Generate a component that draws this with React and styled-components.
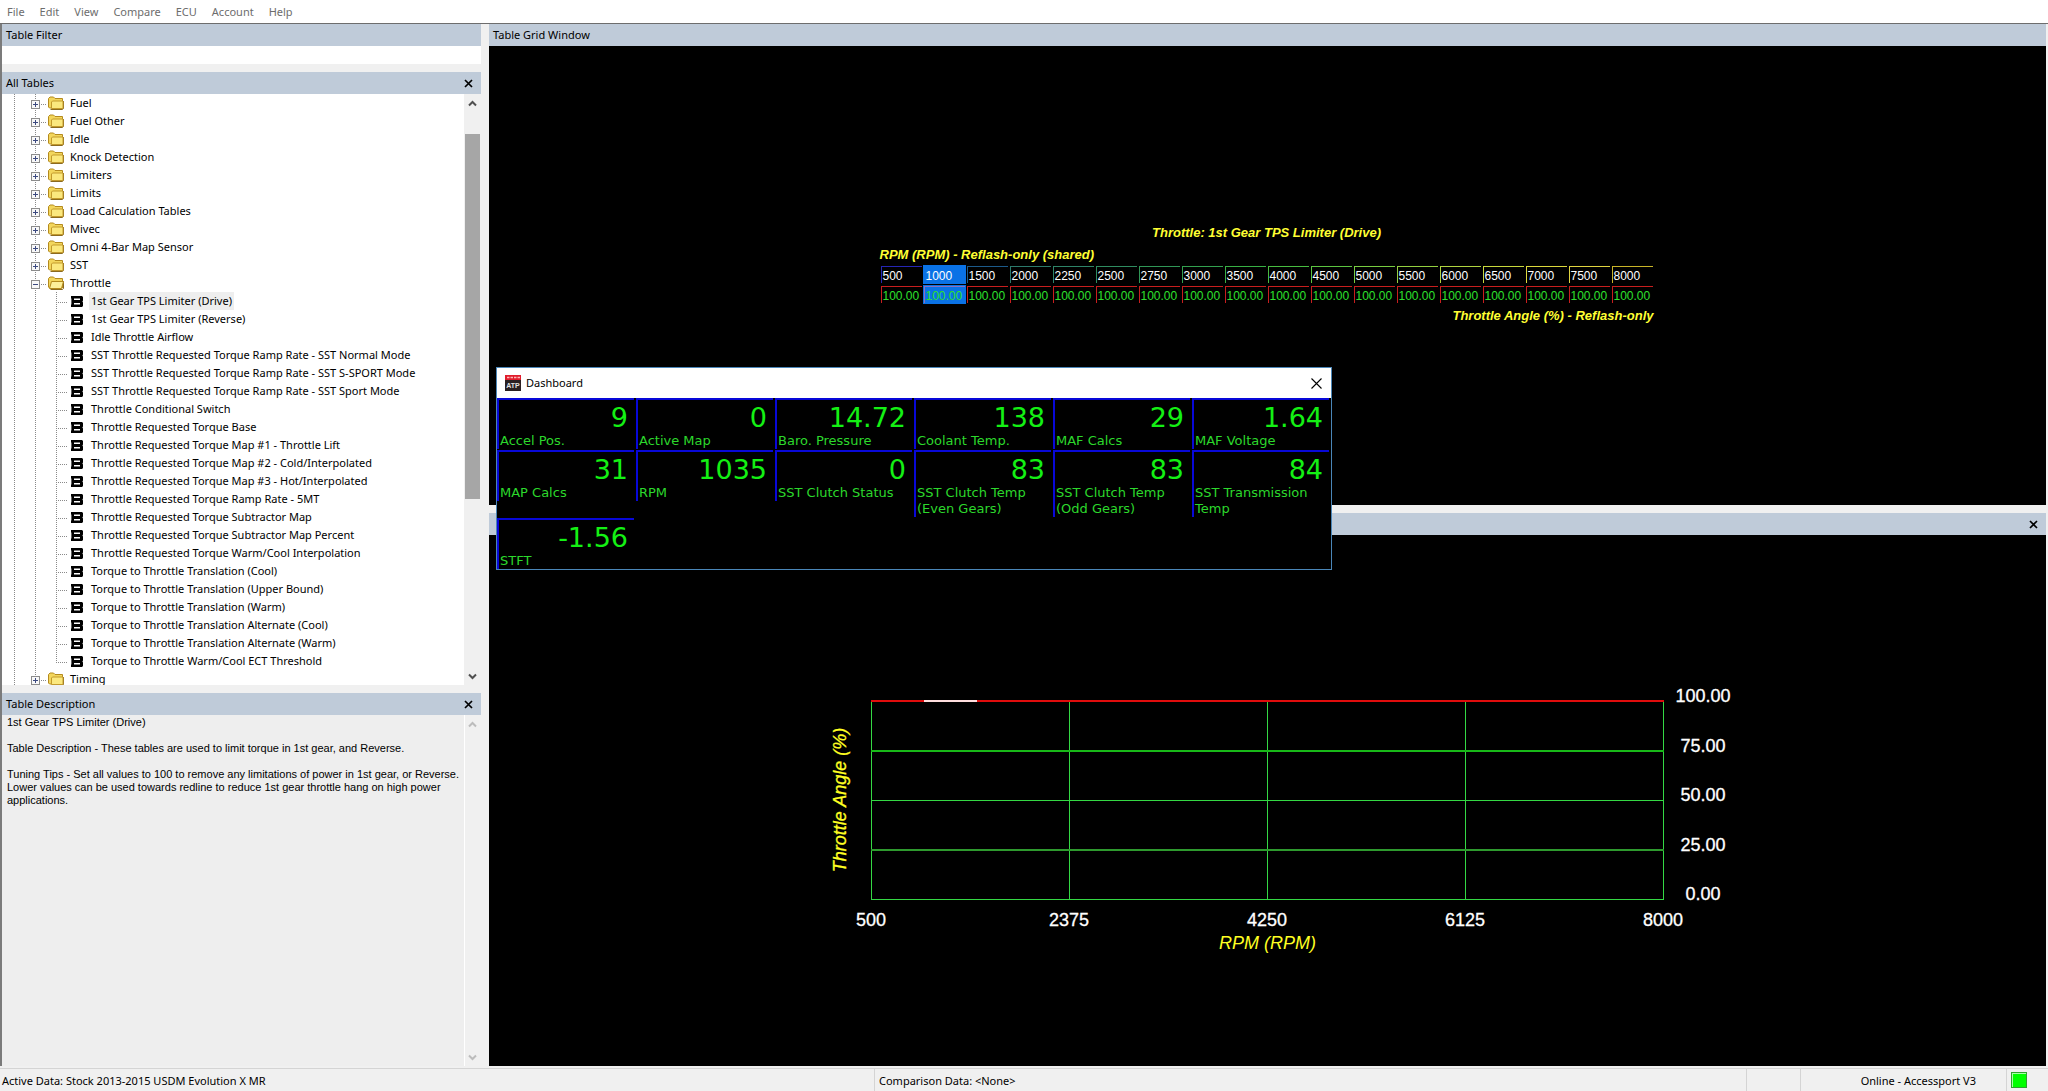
import styled, { createGlobalStyle } from 'styled-components';


const GlobalStyle = createGlobalStyle`
	* {
		box-sizing: border-box;
	}
	body {
		margin: 0;
		background: #f0f0f0;
		font-family: 'Noto Sans', 'Open Sans', sans-serif;
		font-size: 11px;
		line-height: 18px;
		color: #000000;
	}
	button {
		margin: 0;
		padding: 0;
		border: 0;
		background: none;
		font: inherit;
		color: inherit;
	}
`;

const Page = styled.div`
	position: relative;
	display: flex;
	flex-direction: column;
	height: 100vh;
	overflow: hidden;
`;

const MenuBar = styled.nav`
	display: flex;
	gap: 15px;
	flex: none;
	height: 24px;
	padding: 3px 7px 0 7px;
	background: #ffffff;
	border-bottom: 1px solid #6d6d6d;
`;

const MenuItem = styled.button`
	height: 18px;
	color: #6d6d6d;
`;

const Body = styled.div`
	display: flex;
	flex: 1;
	gap: 8px;
	min-height: 0;
	padding: 0 2px 2px 0;
`;

const Sidebar = styled.aside`
	display: flex;
	flex-direction: column;
	gap: 8px;
	flex: 0 0 481px;
	min-height: 0;
	border-left: 2px solid #7b7b7b;
`;

const Main = styled.main`
	display: flex;
	flex-direction: column;
	gap: 8px;
	flex: 1;
	min-width: 0;
`;

const Panel = styled.section`
	display: flex;
	flex-direction: column;
	flex: ${props => props.$grow ? `${props.$grow} 1 0` : 'none'};
	min-height: 0;
`;

const PanelHeader = styled.header`
	display: flex;
	align-items: center;
	justify-content: space-between;
	flex: none;
	height: 22px;
	padding: 0 8px 0 4px;
	background: #bfcbd9;
`;

const PanelTitle = styled.h2`
	margin: 0;
	font-size: 11px;
	font-weight: normal;
`;

const CloseButton = styled.button`
	display: flex;
	margin-left: auto;
`;

const FilterInput = styled.input`
	width: 100%;
	height: 18px;
	padding: 0 4px;
	border: 0;
	font: inherit;
	background: #ffffff;
`;

const ScrollArea = styled.div`
	display: flex;
	flex: 1;
	min-height: 0;
	background: ${props => props.$muted ? '#eeeeee' : '#ffffff'};
`;

const ScrollBar = styled.div`
	display: flex;
	flex-direction: column;
	align-items: center;
	flex: 0 0 17px;
	padding: 4px 1px 3px 0;
	background: #f0f0f0;
	border-left: 1px solid ${props => props.$muted ? '#ffffff' : '#f0f0f0'};
	color: ${props => props.$muted ? '#bcbcbc' : '#505050'};
`;

const ScrollTrack = styled.div`
	flex: 1;
	width: 100%;
	padding-top: 25px;
`;

const ScrollThumb = styled.div`
	height: 68%;
	background: #a6a6a6;
`;

const ScrollButton = styled.button`
	display: flex;
	height: 11px;
	align-items: center;
`;

const Tree = styled.ul`
	flex: 1;
	margin: 0;
	padding: 0 0 0 2px;
	list-style: none;
	overflow: hidden;
`;

const TreeRow = styled.li`
	display: flex;
	align-items: center;
	height: 18px;
	white-space: nowrap;
`;

const Guide = styled.span`
	display: flex;
	align-items: center;
	flex: 0 0 21px;
	height: 18px;
	padding: 2px 0 0 6px;
	background-image:
		repeating-linear-gradient(to bottom, #8a8a8a 0 1px, transparent 1px 2px),
		repeating-linear-gradient(to right, #8a8a8a 0 1px, transparent 1px 2px);
	background-repeat: no-repeat;
	background-position: 10px 0, 10px 10px;
	background-size: 1px ${props => props.$end ? '11px' : '18px'}, ${props => props.$branch ? '11px' : '0'} 1px;
`;

const Expander = styled.button`
	display: flex;
	width: 9px;
	height: 9px;
	background: #ffffff;
`;

const FolderLabel = styled.span`
	padding-left: 6px;
	line-height: 12px;
`;

const TableLink = styled.button`
	height: 18px;
	margin-left: 6px;
	padding: 0 2px;
	background: ${props => props.$selected ? '#eeeeee' : 'none'};
`;

const IconSlot = styled.span`
	display: flex;
	padding-left: ${props => props.$leaf ? '4px' : '2px'};
`;

const Description = styled.div`
	flex: 1;
	padding: 1px 4px 0 5px;
	font-family: 'Liberation Sans', Arial, sans-serif;
	line-height: 13px;
`;

const Para = styled.p`
	margin: 0 0 13px 0;
`;

const Canvas = styled.div`
	display: flex;
	align-items: center;
	justify-content: center;
	flex: 1;
	min-height: 0;
	background: #000000;
	font-family: 'Liberation Sans', Arial, sans-serif;
`;

const MapTable = styled.div`
	display: flex;
	flex-direction: column;
	padding: 0 2px 2px 0;
	color: #ffff33;
	font-size: 13px;
	font-weight: bold;
	font-style: italic;
	line-height: 16px;
`;

const MapTitle = styled.div`
	margin-bottom: 6px;
	text-align: center;
`;

const AxisName = styled.div`
	padding: 0 1px;
	text-align: ${props => props.$right ? 'right' : 'left'};
`;

const Grid = styled.table`
	margin-bottom: 2px;
	border-collapse: separate;
	border-spacing: 2px 3px;
	table-layout: fixed;
	font-size: 12px;
	font-style: normal;
	font-weight: normal;
`;

const AxisCell = styled.th`
	width: 41px;
	height: 17px;
	padding: 3px 0 0 1px;
	border-top: 1px solid ${props => props.$tint};
	border-left: 1px solid ${props => props.$tint};
	background: ${props => props.$selected ? '#0a72e6' : '#000000'};
	box-shadow: ${props => props.$selected ? '0 0 0 1px #0a72e6' : 'none'};
	color: #ffffff;
	font-weight: normal;
	line-height: 13px;
	text-align: left;
`;

const ValueCell = styled.td`
	width: 41px;
	height: 17px;
	padding: 3px 0 0 1px;
	border-top: 1px solid ${props => props.$selected ? '#8a6fc0' : '#c81e1e'};
	border-left: 1px solid ${props => props.$selected ? '#8a6fc0' : '#c81e1e'};
	background: ${props => props.$selected ? '#0a72e6' : '#000000'};
	box-shadow: ${props => props.$selected ? '0 0 0 1px #0a72e6' : 'none'};
	color: #2ee02e;
	line-height: 13px;
`;

const ChartText = styled.text`
	font-family: 'Liberation Sans', Arial, sans-serif;
	font-size: 18px;
	font-style: ${props => props.$title ? 'italic' : 'normal'};
	fill: ${props => props.$title ? '#ffff22' : '#ffffff'};
	stroke: ${props => props.$title ? '#ffff22' : '#ffffff'};
	stroke-width: 0.3px;
	text-anchor: middle;
`;

const ChartBox = styled.figure`
	display: flex;
	flex-direction: column;
	align-items: center;
	margin: 0;
	padding-top: 18px;
`;

const ChartCaption = styled.figcaption`
	color: #ffff22;
	font-size: 18px;
	font-style: italic;
	line-height: 22px;
`;

const DashWindow = styled.section`
	position: absolute;
	top: 367px;
	left: 496px;
	width: 836px;
	background: #000000;
	border: 1px solid #4a86b8;
`;

const DashHeader = styled.header`
	display: flex;
	align-items: center;
	gap: 5px;
	height: 30px;
	padding: 0 9px 0 8px;
	background: #ffffff;
`;

const Gauges = styled.div`
	display: grid;
	grid-template-columns: repeat(6, 1fr);
	align-items: start;
	gap: 1px 2px;
	padding-right: 2px;
	font-family: 'DejaVu Sans', Verdana, sans-serif;
`;

const Gauge = styled.div`
	padding: 3px 0 0 1px;
	border-top: 2px solid #0808d8;
	border-left: 2px solid #0808d8;
`;

const GaugeValue = styled.div`
	padding-right: 6px;
	color: #14f014;
	font-size: 27px;
	line-height: 30px;
	text-align: right;
`;

const GaugeLabel = styled.div`
	color: #2cd82c;
	font-size: 13px;
	line-height: 16px;
`;

const StatusBar = styled.footer`
	display: flex;
	flex: none;
	height: 23px;
	border-top: 1px solid #d4d4d4;
	line-height: 24px;
`;

const StatusCell = styled.div`
	flex: ${props => props.$width ? `0 0 ${props.$width}px` : '1 1 0'};
	padding: 0 ${props => props.$right ? '30px' : '4px'} 0 ${props => props.$first ? '2px' : '4px'};
	border-right: 1px solid #d4d4d4;
	text-align: ${props => props.$right ? 'right' : 'left'};
`;

const StatusLight = styled.div`
	flex: none;
	width: 16px;
	height: 16px;
	margin: 3px 21px 0 4px;
	background: #00ff00;
	border: 1px solid #30a030;
	box-shadow: inset 1px 1px 0 #a8ffa8;
`;


const menu = ['File', 'Edit', 'View', 'Compare', 'ECU', 'Account', 'Help'];

const folders = [
	'Fuel',
	'Fuel Other',
	'Idle',
	'Knock Detection',
	'Limiters',
	'Limits',
	'Load Calculation Tables',
	'Mivec',
	'Omni 4-Bar Map Sensor',
	'SST',
];

const throttleTables = [
	'1st Gear TPS Limiter (Drive)',
	'1st Gear TPS Limiter (Reverse)',
	'Idle Throttle Airflow',
	'SST Throttle Requested Torque Ramp Rate - SST Normal Mode',
	'SST Throttle Requested Torque Ramp Rate - SST S-SPORT Mode',
	'SST Throttle Requested Torque Ramp Rate - SST Sport Mode',
	'Throttle Conditional Switch',
	'Throttle Requested Torque Base',
	'Throttle Requested Torque Map #1 - Throttle Lift',
	'Throttle Requested Torque Map #2 - Cold/Interpolated',
	'Throttle Requested Torque Map #3 - Hot/Interpolated',
	'Throttle Requested Torque Ramp Rate - 5MT',
	'Throttle Requested Torque Subtractor Map',
	'Throttle Requested Torque Subtractor Map Percent',
	'Throttle Requested Torque Warm/Cool Interpolation',
	'Torque to Throttle Translation (Cool)',
	'Torque to Throttle Translation (Upper Bound)',
	'Torque to Throttle Translation (Warm)',
	'Torque to Throttle Translation Alternate (Cool)',
	'Torque to Throttle Translation Alternate (Warm)',
	'Torque to Throttle Warm/Cool ECT Threshold',
];

const columns = [
	{ rpm: 500, tint: '#2626b4' },
	{ rpm: 1000, tint: '#0a72e6' },
	{ rpm: 1500, tint: '#1c5a8a' },
	{ rpm: 2000, tint: '#2c7a6c' },
	{ rpm: 2250, tint: '#2e8468' },
	{ rpm: 2500, tint: '#2f8c60' },
	{ rpm: 2750, tint: '#309656' },
	{ rpm: 3000, tint: '#32a04e' },
	{ rpm: 3500, tint: '#38b044' },
	{ rpm: 4000, tint: '#48bc40' },
	{ rpm: 4500, tint: '#5cc440' },
	{ rpm: 5000, tint: '#78cc40' },
	{ rpm: 5500, tint: '#94d040' },
	{ rpm: 6000, tint: '#b0d440' },
	{ rpm: 6500, tint: '#c8d83c' },
	{ rpm: 7000, tint: '#dcd83c' },
	{ rpm: 7500, tint: '#e0d440' },
	{ rpm: 8000, tint: '#c8b428' },
];

const gauges = [
	['Accel Pos.', '9'],
	['Active Map', '0'],
	['Baro. Pressure', '14.72'],
	['Coolant Temp.', '138'],
	['MAF Calcs', '29'],
	['MAF Voltage', '1.64'],
	['MAP Calcs', '31'],
	['RPM', '1035'],
	['SST Clutch Status', '0'],
	['SST Clutch Temp (Even Gears)', '83'],
	['SST Clutch Temp (Odd Gears)', '83'],
	['SST Transmission Temp', '84'],
	['STFT', '-1.56'],
];

const xTicks = [500, 2375, 4250, 6125, 8000];
const yTicks = ['100.00', '75.00', '50.00', '25.00', '0.00'];


const CrossIcon = () => (
	<svg width="9" height="9" viewBox="0 0 9 9">
		<path d="M1 1L8 8M8 1L1 8" stroke="#000000" strokeWidth="1.7" />
	</svg>
);

const ArrowIcon = ({ down }) => (
	<svg width="9" height="7" viewBox="0 0 9 7">
		<path d={down ? 'M1 1.5L4.5 5L8 1.5' : 'M1 5.5L4.5 2L8 5.5'} fill="none" stroke="currentColor" strokeWidth="2" />
	</svg>
);

const FolderIcon = ({ open }) => (
	<svg width="16" height="14" viewBox="0 0 16 14">
		<path d="M2.5 13.5h12l1-1V5" fill="none" stroke="#8a6a20" strokeWidth="1" />
		<path d="M0.5 11V2.5L2 1h3.5L7 2.5h7.5V12H1.5z" fill="#f3d65c" stroke="#b48a1e" />
		{open
			? <path d="M1.5 12.5L3.5 5.5h12L13.5 12.5z" fill="#fdf09a" stroke="#b48a1e" />
			: <path d="M3.5 12.5V6l1-1h10.5v7.5z" fill="#fbe87e" stroke="#c39a2c" />}
	</svg>
);

const TableIcon = () => (
	<svg width="12" height="12" viewBox="0 0 12 12">
		<path fillRule="evenodd" d="M0 1h11l1 1v3.5l-0.6 1L12 7.5V11l-1 1H0V9.5h0.4v-6H0zM3 3.5V5h6V3.5zM3 8v1.5h6V8z" fill="#000000" />
	</svg>
);

const AppIcon = () => (
	<svg width="16" height="16" viewBox="0 0 16 16">
		<rect width="16" height="16" fill="#2a2022" />
		<rect width="16" height="5" fill="#e01c2c" />
		<path d="M2 2.5h2.5M5.5 2.5H8M9 2.5h2.5M12.5 2.5H15" stroke="#ffb8b8" strokeWidth="1.6" />
		<text x="8" y="13" fontFamily="Liberation Sans, sans-serif" fontSize="7" fontWeight="bold" fill="#e4e4e4" textAnchor="middle">ATP</text>
	</svg>
);

const Toggle = ({ open, name }) => (
	<Expander aria-label={`${open ? 'Collapse' : 'Expand'} ${name}`}>
		<svg width="9" height="9" viewBox="0 0 9 9">
			<rect x="0.5" y="0.5" width="8" height="8" fill="#f8f8f8" stroke="#8c8c8c" />
			<path d={open ? 'M2 4.5h5' : 'M2 4.5h5M4.5 2v5'} stroke="#3c4a80" />
		</svg>
	</Expander>
);

const FolderRow = ({ name, open, last }) => (
	<TreeRow>
		<Guide />
		<Guide $branch $end={last}><Toggle open={open} name={name} /></Guide>
		<IconSlot><FolderIcon open={open} /></IconSlot>
		<FolderLabel>{name}</FolderLabel>
	</TreeRow>
);

const LeafRow = ({ name, selected, last }) => (
	<TreeRow>
		<Guide />
		<Guide />
		<Guide $branch $end={last} />
		<IconSlot $leaf><TableIcon /></IconSlot>
		<TableLink $selected={selected}>{name}</TableLink>
	</TreeRow>
);

const Scroller = ({ muted, children }) => (
	<ScrollBar $muted={muted}>
		<ScrollButton aria-label="Scroll up"><ArrowIcon /></ScrollButton>
		<ScrollTrack>{children}</ScrollTrack>
		<ScrollButton aria-label="Scroll down"><ArrowIcon down /></ScrollButton>
	</ScrollBar>
);

const Chart = () => (
	<svg width="941" height="267" viewBox="0 0 941 267" shapeRendering="crispEdges">
		<path d="M74.5 36V235M272.5 36V235M470.5 36V235M668.5 36V235M866.5 36V235" stroke="#34d844" />
		<path d="M74 135.5H867M74 234.5H867" stroke="#34d844" />
		<path d="M74 86H867" stroke="#18b818" strokeWidth="2" />
		<path d="M74 185H867" stroke="#2e9a2e" strokeWidth="2" />
		<path d="M74 36H867" stroke="#e00c0c" strokeWidth="2" />
		<path d="M127 36H180" stroke="#ffdede" strokeWidth="2" />
		{xTicks.map((tick, i) => (
			<ChartText key={tick} x={74 + i * 198} y="261">{tick}</ChartText>
		))}
		{yTicks.map((tick, i) => (
			<ChartText key={tick} x="906" y={Math.round(37 + i * 49.5)}>{tick}</ChartText>
		))}
		<ChartText $title transform="translate(49 135) rotate(-90)">Throttle Angle (%)</ChartText>
	</svg>
);


const App = () => {
	return (
		<Page>
			<GlobalStyle />
			<MenuBar>
				{menu.map(item => <MenuItem key={item}>{item}</MenuItem>)}
			</MenuBar>
			<Body>
				<Sidebar>
					<Panel>
						<PanelHeader><PanelTitle>Table Filter</PanelTitle></PanelHeader>
						<FilterInput type="text" aria-label="Table Filter" />
					</Panel>
					<Panel $grow={613}>
						<PanelHeader>
							<PanelTitle>All Tables</PanelTitle>
							<CloseButton aria-label="Close All Tables"><CrossIcon /></CloseButton>
						</PanelHeader>
						<ScrollArea>
							<Tree>
								{folders.map(name => <FolderRow key={name} name={name} />)}
								<FolderRow name="Throttle" open />
								{throttleTables.map((name, i) => (
									<LeafRow key={name} name={name} selected={i === 0} last={i === throttleTables.length - 1} />
								))}
								<FolderRow name="Timing" />
							</Tree>
							<Scroller><ScrollThumb /></Scroller>
						</ScrollArea>
					</Panel>
					<Panel $grow={373}>
						<PanelHeader>
							<PanelTitle>Table Description</PanelTitle>
							<CloseButton aria-label="Close Table Description"><CrossIcon /></CloseButton>
						</PanelHeader>
						<ScrollArea $muted>
							<Description>
								<Para>1st Gear TPS Limiter (Drive)</Para>
								<Para>Table Description - These tables are used to limit torque in 1st gear, and Reverse.</Para>
								<Para>Tuning Tips - Set all values to 100 to remove any limitations of power in 1st gear, or Reverse. Lower values can be used towards redline to reduce 1st gear throttle hang on high power applications.</Para>
							</Description>
							<Scroller muted />
						</ScrollArea>
					</Panel>
				</Sidebar>
				<Main>
					<Panel $grow={481}>
						<PanelHeader><PanelTitle>Table Grid Window</PanelTitle></PanelHeader>
						<Canvas>
							<MapTable>
								<MapTitle>Throttle: 1st Gear TPS Limiter (Drive)</MapTitle>
								<AxisName>RPM (RPM) - Reflash-only (shared)</AxisName>
								<Grid>
									<thead>
										<tr>
											{columns.map(({ rpm, tint }) => (
												<AxisCell key={rpm} scope="col" $tint={tint} $selected={rpm === 1000}>{rpm}</AxisCell>
											))}
										</tr>
									</thead>
									<tbody>
										<tr>
											{columns.map(({ rpm }) => (
												<ValueCell key={rpm} $selected={rpm === 1000}>100.00</ValueCell>
											))}
										</tr>
									</tbody>
								</Grid>
								<AxisName $right>Throttle Angle (%) - Reflash-only</AxisName>
							</MapTable>
						</Canvas>
					</Panel>
					<Panel $grow={553}>
						<PanelHeader>
							<CloseButton aria-label="Close graph"><CrossIcon /></CloseButton>
						</PanelHeader>
						<Canvas>
							<ChartBox>
								<Chart />
								<ChartCaption>RPM (RPM)</ChartCaption>
							</ChartBox>
						</Canvas>
					</Panel>
				</Main>
			</Body>
			<StatusBar>
				<StatusCell $width={875} $first>Active Data: Stock 2013-2015 USDM Evolution X MR</StatusCell>
				<StatusCell>Comparison Data: &lt;None&gt;</StatusCell>
				<StatusCell $width={54} />
				<StatusCell $width={206} $right>Online - Accessport V3</StatusCell>
				<StatusLight />
			</StatusBar>
			<DashWindow>
				<DashHeader>
					<AppIcon />
					<PanelTitle>Dashboard</PanelTitle>
					<CloseButton aria-label="Close Dashboard">
						<svg width="11" height="11" viewBox="0 0 11 11">
							<path d="M0.5 0.5L10.5 10.5M10.5 0.5L0.5 10.5" stroke="#000000" strokeWidth="1.1" />
						</svg>
					</CloseButton>
				</DashHeader>
				<Gauges>
					{gauges.map(([label, value]) => (
						<Gauge key={label}>
							<GaugeValue>{value}</GaugeValue>
							<GaugeLabel>{label}</GaugeLabel>
						</Gauge>
					))}
				</Gauges>
			</DashWindow>
		</Page>
	)
}


export default App;
